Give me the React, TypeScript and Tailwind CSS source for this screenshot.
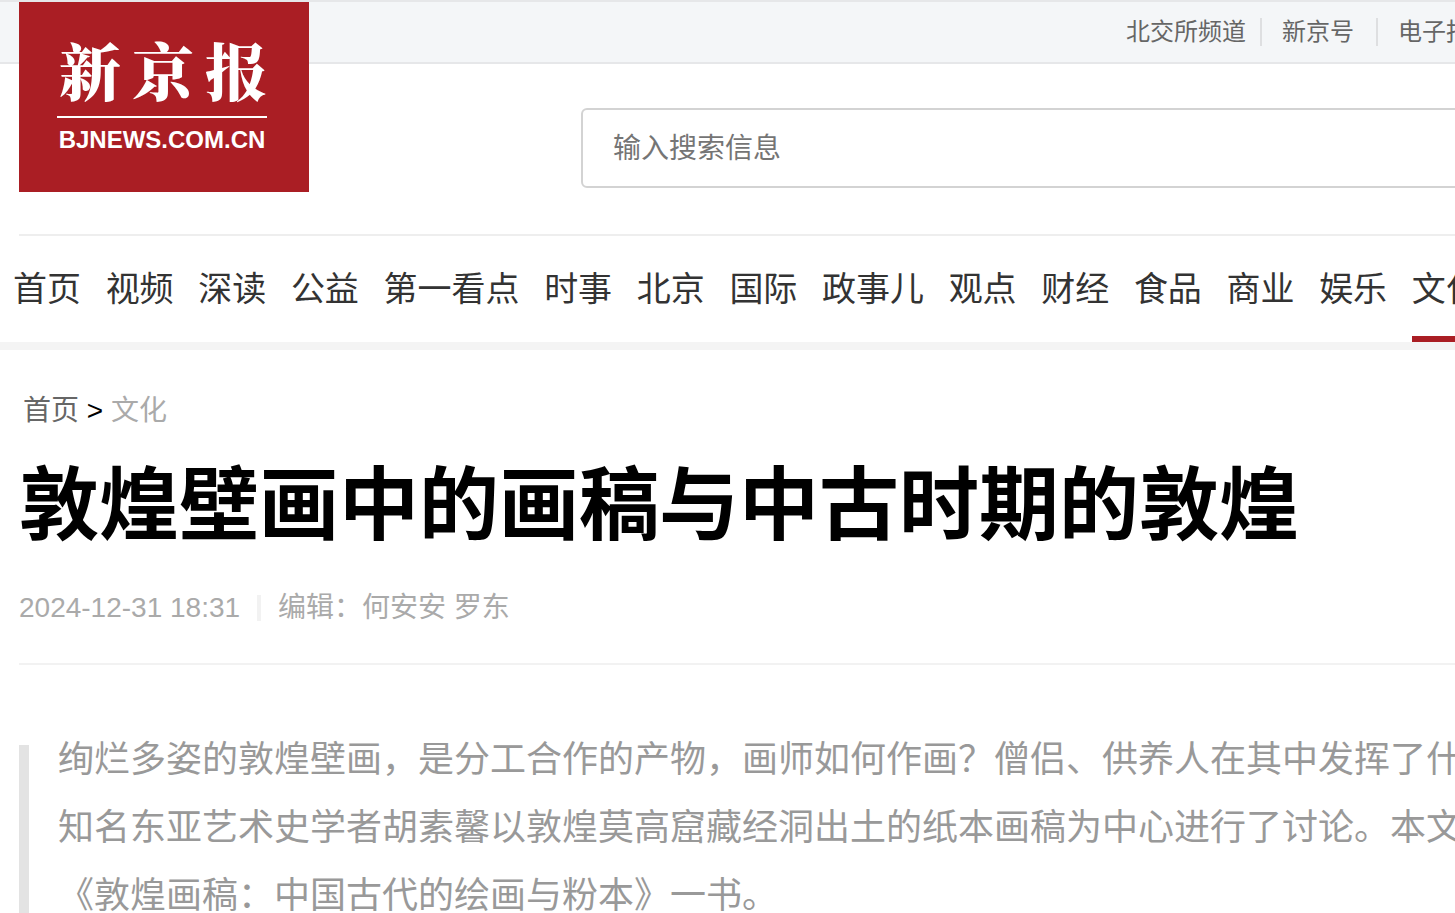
const topLinks = ["新京号", "电子报"];

const channels = [
  "首页",
  "视频",
  "深读",
  "公益",
  "第一看点",
  "时事",
  "北京",
  "国际",
  "政事儿",
  "观点",
  "财经",
  "食品",
  "商业",
  "娱乐",
  "文化",
];

const summary = [
  "绚烂多姿的敦煌壁画，是分工合作的产物，画师如何作画？僧侣、供养人在其中发挥了什",
  "知名东亚艺术史学者胡素馨以敦煌莫高窟藏经洞出土的纸本画稿为中心进行了讨论。本文",
  "《敦煌画稿：中国古代的绘画与粉本》一书。",
];

const Logo = () => (
  <a
    href="#"
    className="absolute top-0.5 left-[19px] flex h-[190px] w-[290px] flex-col bg-[#aa1e24] pt-9 pl-[38px] text-white"
  >
    <span className="flex w-[210px] justify-between pl-0.5 font-['Noto_Serif_CJK_SC','Noto_Sans_CJK_SC',serif] text-[62px] leading-[64px] font-black">
      <span>新</span>
      <span>京</span>
      <span>报</span>
    </span>
    <span className="mt-3.5 h-0.5 w-[210px] bg-white" />
    <span className="mt-1.5 w-[210px] text-center font-['Liberation_Sans',Arial,sans-serif] text-2xl leading-8 font-bold">
      BJNEWS.COM.CN
    </span>
  </a>
);

const TopBar = () => (
  <div className="flex h-16 items-center justify-end border-y-2 border-[#e6e7e9] bg-[#f4f6f8] text-2xl text-[#666]">
    <div className="-mr-[15px] flex items-center whitespace-nowrap">
      <a href="#" className="pr-3.5">
        北交所频道
      </a>
      {topLinks.map((link) => (
        <div key={link} className="flex items-center">
          <span className="h-7 w-0.5 bg-[#dedfe1]" />
          <a href="#" className="px-5 last:pr-0 [div:not(:last-child)>&]:pr-[22px]">
            {link}
          </a>
        </div>
      ))}
    </div>
  </div>
);

const App = () => {
  return (
    <div className="h-screen overflow-hidden bg-white font-['Liberation_Sans','Noto_Sans_CJK_SC',sans-serif]">
      <header className="relative">
        <TopBar />
        <Logo />

        <div className="ml-[19px] flex h-[172px] border-b-2 border-[#eee] pt-11 pl-[562px]">
          <input
            type="search"
            aria-label="输入搜索信息"
            placeholder="输入搜索信息"
            className="-mr-2 h-20 min-w-0 flex-1 rounded-md border-2 border-[#d3d3d3] px-[30px] pt-0.5 text-[28px] outline-none placeholder:text-[#757575]"
          />
        </div>

        <nav className="h-[114px] border-b-8 border-[#f4f4f4] pl-[13px] font-['Noto_Sans_CJK_SC',sans-serif] text-[34px] leading-[102px] whitespace-nowrap text-[#333]">
          {channels.map((name) => (
            <span key={name}>
              <a
                href="#"
                className={
                  name === "文化"
                    ? "inline-block h-[106px] border-b-6 border-[#aa1e24]"
                    : "mr-[17px] inline-block h-[106px]"
                }
              >
                {name}
              </a>{" "}
            </span>
          ))}
        </nav>
      </header>

      <main className="pl-[19px]">
        <div className="pt-10 pl-1 text-[28px] leading-[42px]">
          <a href="#" className="text-[#666]">
            首页
          </a>
          {" > "}
          <a href="#" className="text-[#aaa]">
            文化
          </a>
        </div>

        <h1 className="mt-3.5 text-[80px] leading-[120px] font-bold whitespace-nowrap text-black">
          敦煌壁画中的画稿与中古时期的敦煌
        </h1>

        <div className="mt-[22px] flex items-center border-b-2 border-[#f2f2f2] pb-[35px] text-[28px] leading-10 text-[#aaa]">
          <span>2024-12-31 18:31</span>
          <span className="mx-[17px] h-[26px] w-1 bg-[#f2f2f2]" />
          <span>编辑：何安安 罗东</span>
        </div>

        {/* Summary */}
        <div className="mt-[61px] flex">
          <span className="mt-[19px] w-2.5 shrink-0 bg-[#e3e3e3]" />
          <p className="pl-[29px] text-[36px] leading-[68px] whitespace-nowrap text-[#999]">
            {summary.map((line) => (
              <span key={line} className="block">
                {line}
              </span>
            ))}
          </p>
        </div>
      </main>
    </div>
  );
};

export default App;
